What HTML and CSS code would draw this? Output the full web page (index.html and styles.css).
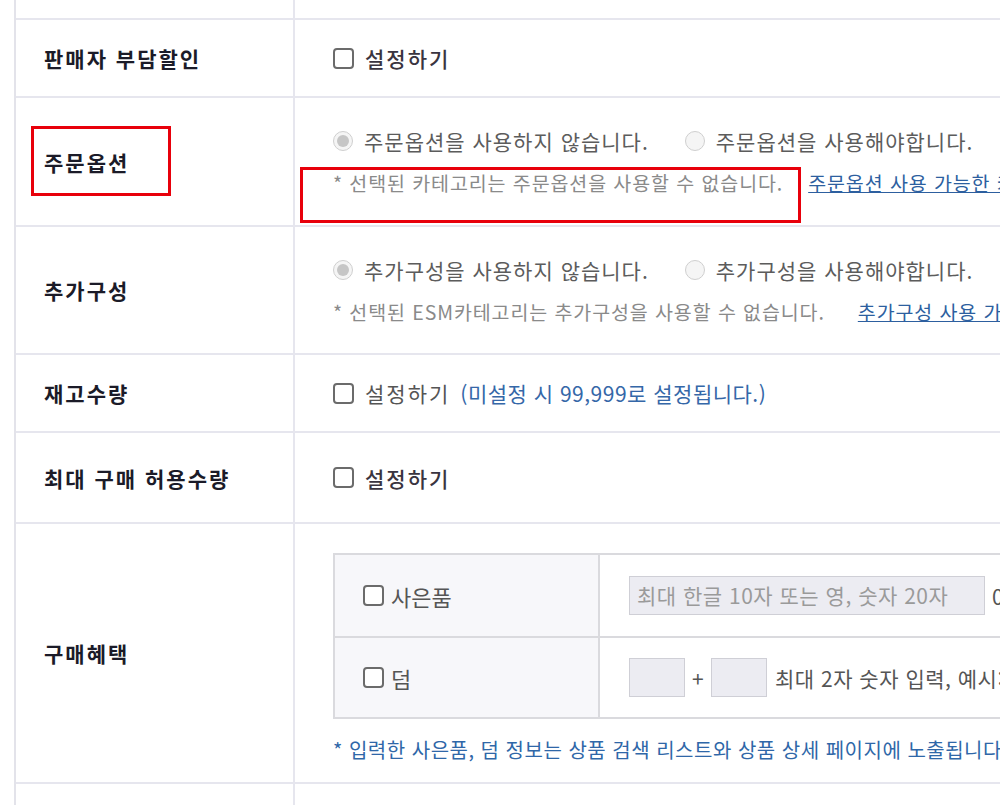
FILE: index.html
```html
<!DOCTYPE html>
<html lang="ko">
<head>
<meta charset="utf-8">
<title>상품 등록</title>
<link rel="stylesheet" href="styles.css">
</head>
<body>
<div class="page">
  <div class="form">
    <div class="row r0"><div class="label"></div><div class="cell"></div></div>

    <div class="row r1">
      <div class="label">판매자 부담할인</div>
      <div class="cell center"><span class="chk"></span><span class="chk-text strong">설정하기</span></div>
    </div>

    <div class="row r2">
      <div class="label">주문옵션</div>
      <div class="cell stack">
        <div class="line">
          <span class="radio on"></span><span class="opt">주문옵션을 사용하지 않습니다.</span>
          <span class="radio second"></span><span class="opt">주문옵션을 사용해야합니다.</span>
        </div>
        <div class="line note">* 선택된 카테고리는 주문옵션을 사용할 수 없습니다.<a class="link l1" href="#">주문옵션 사용 가능한 카테고리 보기</a></div>
      </div>
    </div>

    <div class="row r3">
      <div class="label">추가구성</div>
      <div class="cell stack">
        <div class="line">
          <span class="radio on"></span><span class="opt">추가구성을 사용하지 않습니다.</span>
          <span class="radio second"></span><span class="opt">추가구성을 사용해야합니다.</span>
        </div>
        <div class="line note">* 선택된 ESM카테고리는 추가구성을 사용할 수 없습니다.<a class="link l2" href="#">추가구성 사용 가능한 카테고리 보기</a></div>
      </div>
    </div>

    <div class="row r4">
      <div class="label">재고수량</div>
      <div class="cell center"><span class="chk"></span><span class="chk-text">설정하기</span><span class="hint">(미설정 시 99,999로 설정됩니다.)</span></div>
    </div>

    <div class="row r5">
      <div class="label">최대 구매 허용수량</div>
      <div class="cell center"><span class="chk"></span><span class="chk-text strong">설정하기</span></div>
    </div>

    <div class="row r6">
      <div class="label">구매혜택</div>
      <div class="cell benefit">
        <div class="inner">
          <div class="irow">
            <div class="ilabel"><span class="chk"></span><span class="ichk-text">사은품</span></div>
            <div class="ival"><span class="input wide">최대 한글 10자 또는 영, 숫자 20자</span><span class="count">0/20</span></div>
          </div>
          <div class="irow">
            <div class="ilabel"><span class="chk"></span><span class="ichk-text">덤</span></div>
            <div class="ival"><span class="input small"></span><span class="plus">+</span><span class="input small"></span><span class="itext">최대 2자 숫자 입력, 예시: 1+1, 10+1</span></div>
          </div>
        </div>
        <div class="bnote">* 입력한 사은품, 덤 정보는 상품 검색 리스트와 상품 상세 페이지에 노출됩니다.</div>
      </div>
    </div>

    <div class="row r7"><div class="label"></div><div class="cell"></div></div>
  </div>

  <div class="mark m1"></div>
  <div class="mark m2"></div>
</div>
</body>
</html>
```

FILE: styles.css
```css
* { box-sizing: border-box; }

html, body {
  margin: 0;
  padding: 0;
  background: #fff;
  overflow: hidden;
}

body {
  font-family: "Noto Sans CJK KR", "Noto Sans", sans-serif;
  color: #333;
  width: 1000px;
  height: 805px;
}

.page {
  position: relative;
  width: 1000px;
  height: 805px;
  overflow: hidden;
}

.form {
  margin-left: 14px;
  border-left: 2px solid #e3e3ea;
  width: 1300px;
  white-space: nowrap;
}

.row {
  display: grid;
  grid-template-columns: 279px 1fr;
  border-bottom: 2px solid #e6e6ee;
}

.r0 { height: 20px; }
.r1 { height: 78px; }
.r2 { height: 129px; }
.r3 { height: 128px; }
.r4 { height: 78px; }
.r5 { height: 91px; }
.r6 { height: 260px; }
.r7 { height: 40px; border-bottom: 0; }

.label {
  border-right: 2px solid #e6e6ee;
  padding-left: 28px;
  display: flex;
  align-items: center;
  font-size: 21px;
  font-weight: 700;
  color: #1b1b28;
  letter-spacing: 2px;
}

.cell {
  padding-left: 38px;
  font-size: 21px;
  color: #555;
}

.center {
  display: flex;
  align-items: center;
}

/* checkbox */
.chk {
  display: inline-block;
  width: 21px;
  height: 21px;
  border: 2px solid #6b6b6b;
  border-radius: 4px;
  background: #fff;
  flex: none;
}

.chk-text {
  margin-left: 11px;
  color: #555;
  letter-spacing: 2px;
}
.chk-text.strong {
  color: #3a3440;
  font-weight: 500;
}

.hint {
  margin-left: 10px;
  color: #3567a8;
  letter-spacing: 0.5px;
}

/* option rows */
.stack {
  display: flex;
  flex-direction: column;
  padding-top: 29px;
  gap: 13px;
}

.line {
  display: flex;
  align-items: center;
  height: 28px;
}

.radio {
  position: relative;
  display: inline-block;
  width: 20px;
  height: 20px;
  border-radius: 50%;
  border: 1px solid #cfcfcf;
  background: #f5f5f5;
  flex: none;
}
.radio.on::after {
  content: "";
  position: absolute;
  left: 3px;
  top: 3px;
  width: 12px;
  height: 12px;
  border-radius: 50%;
  background: #c6c6c6;
}
.radio.second { margin-left: 36px; }

.opt {
  margin-left: 11px;
  color: #5c5c5c;
  letter-spacing: 1px;
}

.note {
  font-size: 19.5px;
  color: #8a8a8a;
  letter-spacing: 0.9px;
}

.link {
  color: #2d5f9f;
  text-decoration: underline;
}
.l1 { margin-left: 25px; }
.l2 { margin-left: 33px; }

/* benefit */
.benefit {
  padding-top: 29px;
}

.inner {
  width: 760px;
  border: 2px solid #dadade;
}

.irow {
  display: grid;
  grid-template-columns: 265px 1fr;
  height: 81px;
}
.irow + .irow { border-top: 2px solid #dadade; }

.ilabel {
  background: #f7f7fa;
  border-right: 2px solid #dadade;
  display: flex;
  align-items: center;
  padding-left: 28px;
}

.ichk-text {
  margin-left: 7px;
  color: #555;
  font-size: 22px;
}

.ival {
  display: flex;
  align-items: center;
  padding-left: 29px;
  font-size: 21px;
  letter-spacing: 0.5px;
  color: #555;
}

.input {
  display: inline-block;
  height: 39px;
  background: #ececf2;
  border: 1px solid #cfcfd6;
  color: #9a9a9a;
  line-height: 37px;
  padding-left: 7px;
}
.input.wide { width: 356px; }
.input.small { width: 56px; }

.count {
  margin-left: 7px;
  color: #555;
}

.plus {
  width: 26px;
  text-align: center;
  color: #555;
}

.itext {
  margin-left: 8px;
  color: #555;
}

.bnote {
  margin-top: 16px;
  font-size: 20px;
  letter-spacing: 0.5px;
  color: #2f67a8;
}

/* annotation marks */
.mark {
  position: absolute;
  border: 3px solid #e8000b;
}
.m1 { left: 31px; top: 126px; width: 140px; height: 70px; }
.m2 { left: 300px; top: 167px; width: 501px; height: 56px; }
```
